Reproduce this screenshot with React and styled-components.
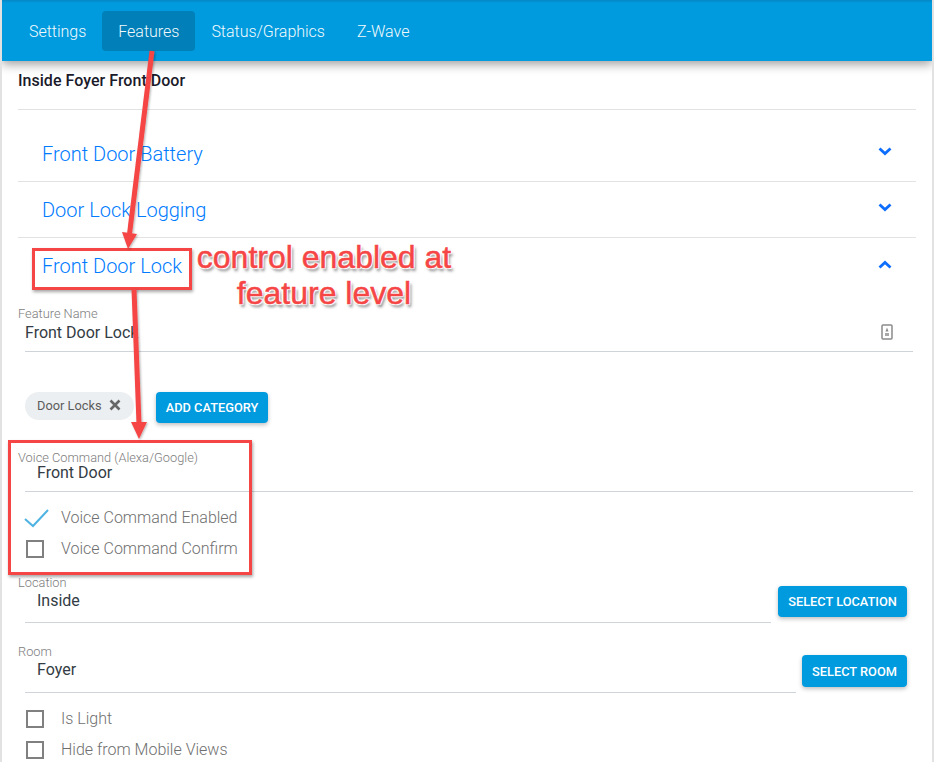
import React from "react";
import styled, { createGlobalStyle } from "styled-components";

const Global = createGlobalStyle`
  html, body { margin: 0; padding: 0; background: #fff; }
  body { font-family: Roboto, "Liberation Sans", sans-serif; overflow: hidden; }
  * { box-sizing: border-box; }
`;

const Page = styled.div`
  position: relative;
  width: 934px;
  height: 762px;
  overflow: hidden;
  background: #fff;
  border-left: 2px solid #e2e2e2;
  border-right: 2px solid #e2e2e2;
`;
const Header = styled.div`
  height: 61px;
  display: flex;
  align-items: flex-start;
  padding: 11px 0 0 11px;
  background: linear-gradient(#0587c4 0, #009ade 3px);
  box-shadow: 0 3px 10px rgba(0, 0, 0, 0.4);
  position: relative;
`;
const Tab = styled.div`
  height: 40px;
  padding: 0 16px;
  display: flex;
  align-items: center;
  border-radius: 4px;
  color: #f2fafd;
  font-size: 16px;
  font-weight: 300;
  letter-spacing: -0.02px;
  background: ${(p) => (p.$active ? "#007fb8" : "transparent")};
`;
const Content = styled.div`
  padding: 0 16px;
`;
const Title = styled.div`
  height: 49px;
  padding-top: 10px;
  line-height: 19px;
  font-size: 16px;
  font-weight: 500;
  letter-spacing: 0.03px;
  color: #1a1a2a;
  border-bottom: 1px solid #e2e2e2;
  margin-bottom: 16px;
`;
const AccRow = styled.div`
  height: 56px;
  display: flex;
  align-items: center;
  justify-content: space-between;
  padding: 0 24px;
  color: #007bff;
  font-size: 20px;
  font-weight: 300;
  border-bottom: ${(p) => (p.$last ? "none" : "1px solid #e2e2e2")};
`;
const Chevron = styled.svg`
  width: 14px;
  height: 10px;
  margin-top: ${(p) => p.$mt}px;
`;
const FieldGroup = styled.div`
  margin-top: ${(p) => p.$mt}px;
`;
const Row = styled.div`
  display: flex;
  align-items: flex-start;
  padding-right: ${(p) => (p.$btn ? 9 : 3)}px;
`;
const Field = styled.div`
  flex: 1;
  min-width: 0;
`;
const Label = styled.div`
  height: 14px;
  line-height: 14px;
  font-size: 12.8px;
  font-weight: 300;
  color: #7d7d7d;
`;
const Value = styled.div`
  margin-left: 7px;
  height: ${(p) => p.$h}px;
  padding: ${(p) => p.$pt}px 20px 0 ${(p) => (p.$indent ? 12 : 0)}px;
  line-height: 20px;
  font-size: 16px;
  font-weight: 400;
  color: #333c44;
  border-bottom: 1px solid #ced4da;
  display: flex;
  justify-content: space-between;
`;
const LiftedValue = styled(Value)`
  margin-top: -2px;
`;
const Badge = styled.svg`
  width: 12px;
  height: 16px;
  margin-top: 1px;
`;
const ChipRow = styled.div`
  display: flex;
  align-items: flex-start;
  margin: 40px 0 0 7px;
  gap: 22px;
`;
const Chip = styled.div`
  width: 109px;
  height: 28px;
  border-radius: 14px;
  background: #eceff1;
  color: #5c5c5c;
  display: flex;
  align-items: center;
  padding: 0 0 2px 12px;
  font-size: 12.8px;
  gap: 8px;
`;
const Button = styled.div`
  height: ${(p) => p.$h}px;
  width: ${(p) => p.$w}px;
  flex: none;
  display: flex;
  align-items: center;
  justify-content: center;
  border-radius: 4px;
  background: #009ade;
  color: #fff;
  font-size: 12.8px;
  font-weight: 500;
  box-shadow: 0 2px 4px rgba(0, 0, 0, 0.25);
  margin: ${(p) => p.$m || 0};
`;
const CheckRow = styled.div`
  height: 31px;
  display: flex;
  align-items: center;
  padding-left: 8px;
  font-size: 16px;
  font-weight: 300;
  color: #6f6f6f;
`;
const CheckBox = styled.span`
  width: 18px;
  height: 18px;
  border: 2px solid #808080;
  flex: none;
  margin-right: 17px;
`;
const Tick = styled.svg`
  width: 27px;
  height: 20px;
  flex: none;
  margin: 0 11px 0 -3px;
`;
const Overlay = styled.svg`
  position: absolute;
  left: -2px;
  top: 0;
  width: 934px;
  height: 762px;
  pointer-events: none;
`;
const Callout = styled.div`
  position: absolute;
  left: 177px;
  top: 239px;
  width: 290px;
  text-align: center;
  font-family: "Liberation Sans", Arial, sans-serif;
  font-size: 32px;
  line-height: 36px;
  color: #f54545;
  -webkit-text-stroke: 0.5px #f54545;
  text-shadow: 0 0 2px #fff, 1px 1px 1px #fff, -1px -1px 1px #fff, 1px -1px 1px #fff, -1px 1px 1px #fff,
    2px 3px 3px rgba(0, 0, 0, 0.5);
`;
const AnnotationBox = styled.div`
  position: absolute;
  left: ${(p) => p.$x - 2}px;
  top: ${(p) => p.$y}px;
  width: ${(p) => p.$w}px;
  height: ${(p) => p.$h}px;
  border: 3px solid #f54545;
  box-shadow: 1px 2px 3px rgba(0, 0, 0, 0.35);
`;

const ChevronIcon = ({ up, mt }) => (
  <Chevron $mt={mt} viewBox="0 0 14 10">
    <path
      d={up ? "M1.5 7.5 L7 2.5 L12.5 7.5" : "M1.5 2.5 L7 7.5 L12.5 2.5"}
      fill="none"
      stroke="#0d6efd"
      strokeWidth="2.8"
    />
  </Chevron>
);

const Check = ({ label }) => (
  <CheckRow>
    <CheckBox />
    {label}
  </CheckRow>
);

export default function App() {
  return (
    <Page>
      <Global />
      <Header>
        <Tab>Settings</Tab>
        <Tab $active>Features</Tab>
        <Tab>Status/Graphics</Tab>
        <Tab>Z-Wave</Tab>
      </Header>
      <Content>
        <Title>Inside Foyer Front Door</Title>
        <AccRow>Front Door Battery<ChevronIcon mt={-5} /></AccRow>
        <AccRow>Door Lock Logging<ChevronIcon mt={-5} /></AccRow>
        <AccRow $last>Front Door Lock<ChevronIcon up mt={-3} /></AccRow>

        <FieldGroup $mt={13}>
          <Row>
            <Field>
              <Label>Feature Name</Label>
              <Value $h={31} $pt={2}>
                Front Door Lock
                <Badge viewBox="0 0 12 16">
                  <rect x="1" y="1" width="10" height="14" rx="1" fill="none" stroke="#8a8a8a" strokeWidth="1.5" />
                  <path d="M6 3.5 L7.5 7.5 H4.5 Z" fill="#8a8a8a" />
                  <rect x="4" y="9" width="4" height="3" fill="#a8a8a8" />
                </Badge>
              </Value>
            </Field>
          </Row>
        </FieldGroup>

        <ChipRow>
          <Chip>
            Door Locks
            <svg width="12" height="12" viewBox="0 0 12 12">
              <path d="M1.5 1.5 L10.5 10.5 M10.5 1.5 L1.5 10.5" stroke="#666" strokeWidth="2.6" />
            </svg>
          </Chip>
          <Button $w={112} $h={31}>ADD CATEGORY</Button>
        </ChipRow>

        <FieldGroup $mt={28}>
          <Row>
            <Field>
              <Label>Voice Command (Alexa/Google)</Label>
              <LiftedValue $h={29} $pt={0} $indent>Front Door</LiftedValue>
            </Field>
          </Row>
        </FieldGroup>
        <FieldGroup $mt={10}>
          <CheckRow>
            <Tick viewBox="0 0 27 20">
              <path d="M2 11 L10 18 L25 2" fill="none" stroke="#4eb3e2" strokeWidth="2" />
            </Tick>
            Voice Command Enabled
          </CheckRow>
          <Check label="Voice Command Confirm" />
        </FieldGroup>

        <FieldGroup $mt={12}>
          <Row $btn>
            <Field>
              <Label>Location</Label>
              <Value $h={33} $pt={1} $indent>Inside</Value>
            </Field>
            <Button $w={129} $h={31} $m="10px 0 0 7px">SELECT LOCATION</Button>
          </Row>
        </FieldGroup>
        <FieldGroup $mt={22}>
          <Row $btn>
            <Field>
              <Label>Room</Label>
              <Value $h={34} $pt={1} $indent>Foyer</Value>
            </Field>
            <Button $w={105} $h={32} $m="10px 0 0 6px">SELECT ROOM</Button>
          </Row>
        </FieldGroup>
        <FieldGroup $mt={10}>
          <Check label="Is Light" />
          <Check label="Hide from Mobile Views" />
        </FieldGroup>
      </Content>

      <AnnotationBox $x={32} $y={248} $w={160} $h={42} />
      <AnnotationBox $x={8} $y={440} $w={244} $h={135} />
      <Callout>control enabled at<br />feature level</Callout>
      <Overlay viewBox="0 0 934 762">
        <defs>
          <filter id="s" x="-20%" y="-5%" width="140%" height="110%">
            <feDropShadow dx="1" dy="1" stdDeviation="1.2" floodOpacity="0.3" />
          </filter>
        </defs>
        <g filter="url(#s)" fill="#f54545" stroke="none">
          <path d="M152 51 L129.5 234" stroke="#f54545" strokeWidth="5" fill="none" />
          <path d="M122 232 L137 234 L128 249 Z" />
          <path d="M134 289 L139 424" stroke="#f54545" strokeWidth="5" fill="none" />
          <path d="M131 422 L147 422 L139 439 Z" />
        </g>
      </Overlay>
    </Page>
  );
}
